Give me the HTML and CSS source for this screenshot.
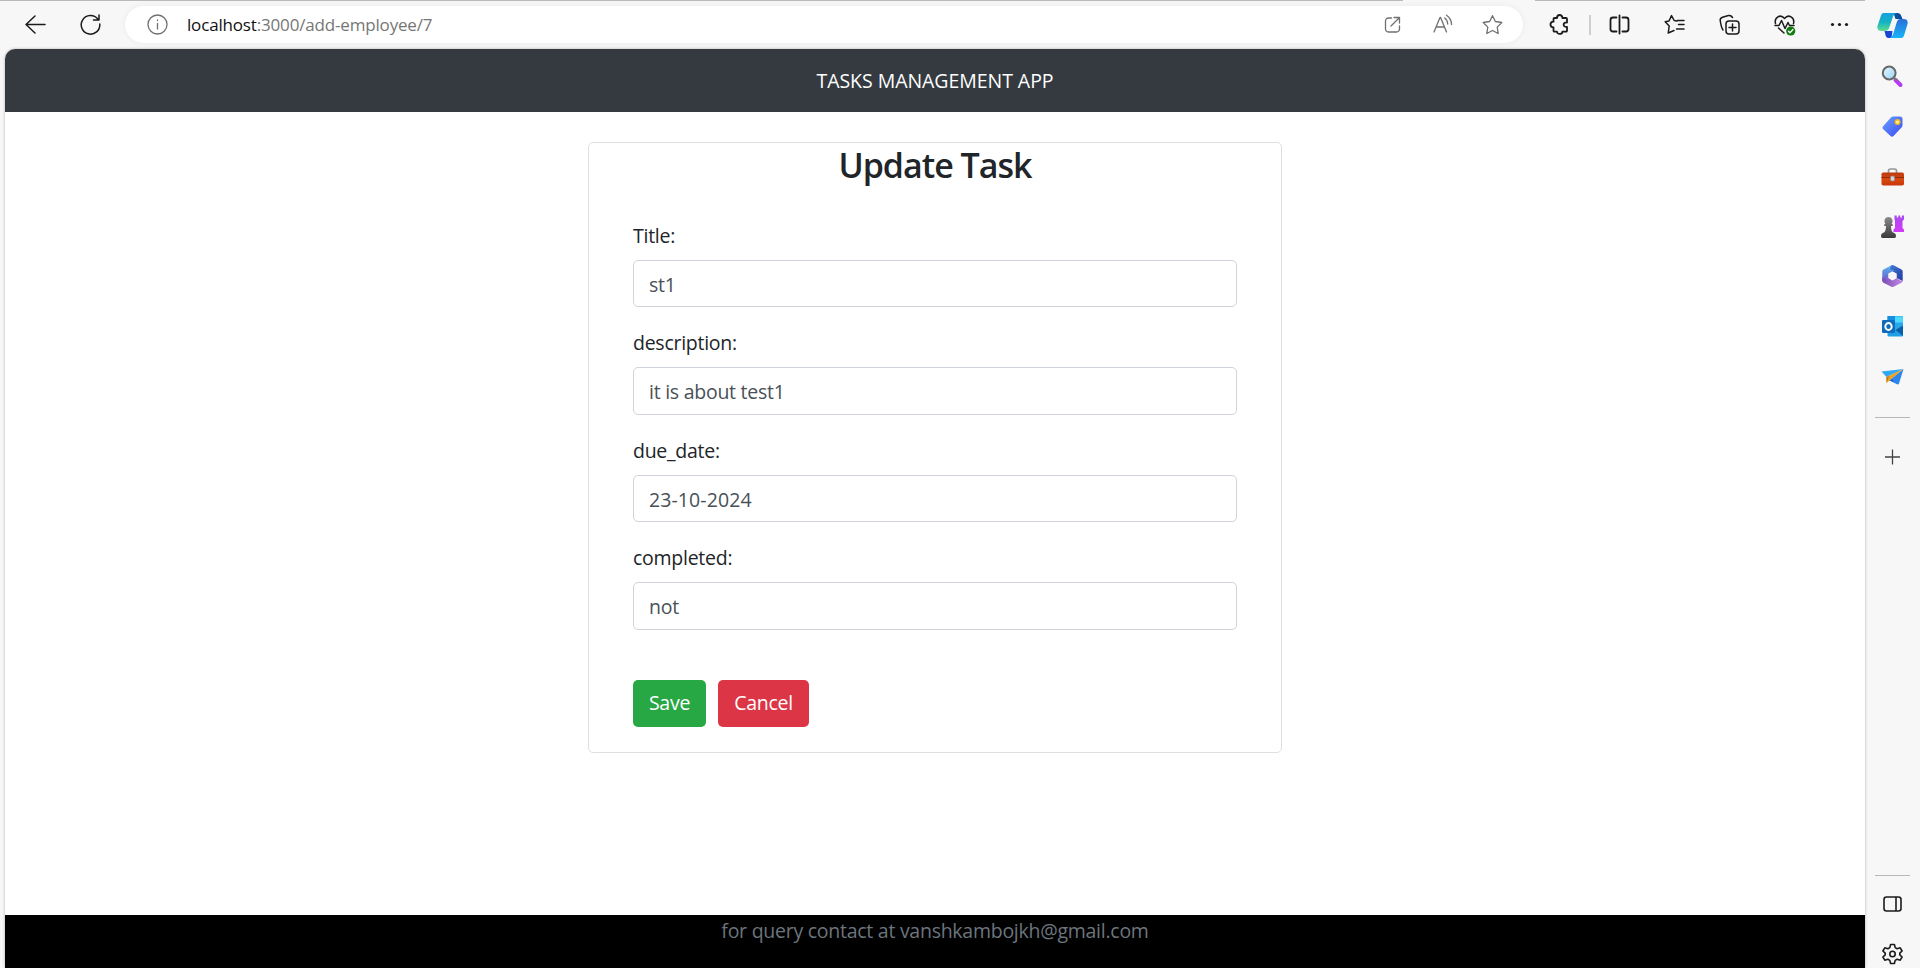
FILE: index.html
```html
<!DOCTYPE html>
<html lang="en">
<head>
<meta charset="utf-8">
<title>Tasks Management App</title>
<link rel="stylesheet" href="styles.css">
</head>
<body>
<div class="window">
  <div class="main">
    <div class="toolbar">
      <span class="slot"><svg class="icon" viewBox="-15.5 -15.5 31 31"><path d="M9.500 0H-9M-.5-8.500-9.500 0-.5 8.500"/></svg></span>
      <span class="slot"><svg class="icon" viewBox="-15.500 -15.500 31 31"><path d="M7.300-5.500A9.300 9.300 0 1 0 9.300-.5M8.500-9.500v5h-5.500"/></svg></span>
      <div class="address">
        <span class="slot info"><svg class="icon grey" viewBox="-15.500 -15.500 31 31"><circle r="9.500"/><path d="M0-1v5.500M0-4.500v.6"/></svg></span>
        <span class="url"><span class="host">localhost</span><span class="path">:3000/add-employee/7</span></span>
        <span class="addr-actions">
          <svg class="icon grey" viewBox="-15.500 -15.500 31 31"><path d="M-1-6.500h-3a3 3 0 0 0-3 3v8a3 3 0 0 0 3 3h8a3 3 0 0 0 3-3v-3M1.500-7h5.500v5.500M7-7-1.500 1.500"/></svg>
          <svg class="icon grey" viewBox="-15.500 -15.500 31 31"><path d="M-8.500 7.500-2.500-7h.6L4 7.500M-6.500 2.500H2M2.200-6.500Q5-4.500 5.200-.5M4-9.300Q9-6 9 0"/></svg>
          <svg class="icon grey" viewBox="-15.500 -15.500 31 31"><path d="M0-8.800 2.900-3 9.300-2 4.700 2.600 5.700 9 0 6-5.700 9-4.700 2.600-9.300-2-2.900-3Z"/></svg>
        </span>
      </div>
      <span class="slot"><svg class="icon thick" viewBox="-15.500 -15.500 31 31"><path d="M-4.500-6.500h2c0-4 5.400-4 5.400 0H6.500q1 0 1 1v3.500c-4.500-.6-4.500 5 0 4.400v3.800q0 1-1 1H2.900c0 3-5.400 3-5.400 0h-2.500q-1 0-1-1V2.800c-4 0-4-5.600 0-5.600v-2.700q0-1 1-1z"/></svg></span>
      <span class="divider"></span>
      <span class="slot"><svg class="icon thick" viewBox="-15.500 -15.500 31 31"><path d="M-3-7h-3.500a2.500 2.500 0 0 0-2.500 2.500v9A2.500 2.500 0 0 0-6.500 7H-3M3-7h3.500A2.500 2.500 0 0 1 9-4.500v9A2.500 2.500 0 0 1 6.500 7H3M0-9v18"/></svg></span>
      <span class="slot"><svg class="icon" viewBox="-15.500 -15.500 31 31"><path d="M3-4H9.500M4 0h5.500M2 4.500h7.500M2.500-3.500-.3-4-3-8.900-5.500-3.500-9.300-2.700-5.300 1.500-6.300 8.500-.5 6"/></svg></span>
      <span class="slot"><svg class="icon" viewBox="-15.500 -15.500 31 31"><path d="M-6.500 5.500Q-8.300 3-9.300-4-9.600-6.300-7-7.200L-1-9Q1.500-9.500 3-7"/><rect x="-3.500" y="-3.500" width="13" height="13" rx="3"/><path d="M3-.5v7M-.5 3h7"/></svg></span>
      <span class="slot"><svg class="icon" viewBox="-15.500 -15.500 31 31"><path d="M-9-1C-10.500-7-4-11 0-6 4-11 10.500-7 9-1M-9.500 1h4l2.500-5L.5 4 3.500-2 5 1H9.500M-6 3.500-.5 8.500"/><circle cx="6.200" cy="6.500" r="4.600" class="ok"/><path class="check" d="m4 6.700 1.500 1.500 3-3.200"/></svg></span>
      <span class="slot"><svg class="icon" viewBox="-15.500 -15.500 31 31"><g class="solid"><circle cx="-7" r="1.600"/><circle cx="0" r="1.600"/><circle cx="7" r="1.600"/></g></svg></span>
    </div>
    <div class="page">
      <header class="navbar"><a class="brand">TASKS MANAGEMENT APP</a></header>
      <main class="content">
        <section class="card">
          <h3 class="heading">Update Task</h3>
          <form class="form">
            <div class="group"><label>Title:</label><div class="control">st1</div></div>
            <div class="group"><label>description:</label><div class="control">it is about test1</div></div>
            <div class="group"><label>due_date:</label><div class="control date">23-10-2024</div></div>
            <div class="group"><label>completed:</label><div class="control">not</div></div>
            <div class="buttons"><button type="button" class="btn save">Save</button><button type="button" class="btn cancel">Cancel</button></div>
          </form>
        </section>
      </main>
      <footer class="footer">for query contact at vanshkambojkh@gmail.com</footer>
    </div>
  </div>
  <aside class="sidebar">
    <svg class="side" viewBox="-15.500 -15 31 30">
      <defs>
        <linearGradient id="cpA" x1="0" y1="0" x2="0" y2="1"><stop offset="0" stop-color="#1ba0e0"/><stop offset=".5" stop-color="#13b2c4"/><stop offset="1" stop-color="#5fdc8e"/></linearGradient>
        <linearGradient id="cpB" x1="0" y1="0" x2="0" y2="1"><stop offset="0" stop-color="#2b6fd8"/><stop offset="1" stop-color="#18b4fa"/></linearGradient>
        <linearGradient id="blue" x1="0" y1="0" x2="1" y2="1"><stop offset="0" stop-color="#6aa5ff"/><stop offset="1" stop-color="#3c46f0"/></linearGradient>
        <linearGradient id="red" x1="0" y1="0" x2="0" y2="1"><stop offset="0" stop-color="#b83a10"/><stop offset=".5" stop-color="#d9480f"/><stop offset="1" stop-color="#c8380a"/></linearGradient>
        <linearGradient id="grey" x1="0" y1="0" x2="0" y2="1"><stop offset="0" stop-color="#8a8a8a"/><stop offset="1" stop-color="#3a3a3a"/></linearGradient>
        <linearGradient id="purple" x1="0" y1="0" x2="0" y2="1"><stop offset="0" stop-color="#a54bf0"/><stop offset="1" stop-color="#d43bf8"/></linearGradient>
        <linearGradient id="lens" x1="0" y1="0" x2="1" y2="1"><stop offset="0" stop-color="#e4f6ff"/><stop offset="1" stop-color="#9cd4f7"/></linearGradient>
        <linearGradient id="mB" x1="0" y1="0" x2="1" y2="1"><stop offset="0" stop-color="#3f7fd8"/><stop offset="1" stop-color="#2438a0"/></linearGradient>
        <linearGradient id="mL" x1="0" y1="0" x2="0" y2="1"><stop offset="0" stop-color="#58b4ee"/><stop offset="1" stop-color="#6a5ac8"/></linearGradient>
        <linearGradient id="mP" x1="0" y1="0" x2="1" y2="0"><stop offset="0" stop-color="#7a4bb4"/><stop offset="1" stop-color="#c58ae6"/></linearGradient>
      </defs>
      <path d="M1-13H5Q8-13 9-9.500L10-7H3Z" fill="#0b4f9c"/>
      <path d="M-8 5H0L-1 12h-3Q-6.500 12-7 9Z" fill="#1646d2"/>
      <path d="M-9-13H4Q1-12 0-8L-3 1Q-4 5-8 5h-3q-5 0-4-5l3-9q1-4 3-4z" fill="url(#cpA)"/>
      <path d="M9 12H-3Q0 11 1 7L4-3Q5-7 8-7h3q5 0 4 5l-3 10q-1 4-3 4z" fill="url(#cpB)"/>
    </svg>
    <svg class="side" viewBox="-15.500 -15 31 30"><path d="m3 4 5 5" stroke="#b43cf5" stroke-width="4" stroke-linecap="round"/><path d="m2 2 2.500 2.500" stroke="#777" stroke-width="2"/><circle cx="-3.300" cy="-3" r="6.400" fill="url(#lens)" stroke="#686868" stroke-width="2"/></svg>
    <svg class="side" viewBox="-15.500 -15 31 30"><path d="M1-9.500h6.500q2.500 0 2.500 2.500v6q0 1.500-1 2.500l-8 8.500q-1.500 1.500-3 0l-7-6.500q-2-1.500-.5-3.200l8-8.800q1-1 2.500-1z" fill="url(#blue)"/><circle cx="5" cy="-4" r="2.300" fill="#fff3a0" stroke="#f2b81b" stroke-width="1.500"/></svg>
    <svg class="side" viewBox="-15.500 -15 31 30"><path d="M-4-3v-2q0-2 2-2h4q2 0 2 2v2" fill="none" stroke="#969696" stroke-width="1.700"/><rect x="-11" y="-3.500" width="22.500" height="13" rx="1.800" fill="url(#red)"/><path d="M-11 1.500h22.500" stroke="#8e2a08"/><rect x="-2" y="0" width="4" height="5" rx="1.500" fill="#d4d4d4" stroke="#888" stroke-width=".6"/></svg>
    <svg class="side" viewBox="-15.500 -15 31 30"><path d="M2-10.500h2.200v2h1.600v-2h2v2h1.600v-2h2.100v4l-1.500 1.500V2l1.500 1.500V6H1V3.500L2.500 2v-7L2-6.500z" fill="url(#purple)"/><path d="M-4-9a4 4 0 0 1 3 6.700q2 .3 1 2.300h-1.500q0 5 2 6.500 3 .8 3 3.500 0 2-1.500 2h-12q-1.500 0-1.500-2 0-2.700 3-3.500 2-1.500 2-6.500H-8q-1-2 1-2.300A4 4 0 0 1-4-9z" fill="url(#grey)"/></svg>
    <svg class="side" viewBox="-15.500 -15 31 30"><path d="M-2-10.300Q0-11.500 2-10.300L9-6.500q1.200.7 1.200 2V5L4 2v-4.500L-3-6z" fill="url(#mB)"/><path d="M-2-10.300-9-6.500q-1.200.7-1.200 2V5L-4 2v-4.500L2-5.500Q-5-6-2-10.300z" fill="url(#mL)"/><path d="M-10.200 1V5q0 1 1.200 1.700l7 3.600q2 1.200 4 0L9 6.700q1.200-.7 1.200-1.700Q8 5 4 2L0 4.500-4 2Q-9 4-10.200 1z" fill="url(#mP)"/><path d="M0-4.500 4-2.300V2L0 4.300-4 2v-4.300z" fill="#f7f7f7"/></svg>
    <svg class="side" viewBox="-15.500 -15 31 30"><rect x="-5" y="-10" width="15.500" height="14" rx="1" fill="#28a8ea"/><path d="M2.500-9.500h7q1 0 1 1v5h-8z" fill="#50d9ff"/><path d="M-5-10H2.500v7H-5z" fill="#1490df"/><path d="M-5 10V1l8 3 7.500-4.500V9.500q0 1-1 1H-4z" fill="#1fa0e6"/><path d="M3 4 10.500-.5V10z" fill="#0a5ea8"/><rect x="-10.500" y="-6" width="13" height="13" rx="1.200" fill="#0f6cbd"/><ellipse cx="-4" cy=".5" rx="3.200" ry="3.500" fill="none" stroke="#fff" stroke-width="1.900"/></svg>
    <svg class="side" viewBox="-15.500 -15 31 30"><path d="M-11-4.500 11-7-6 1z" fill="#30a9f2"/><path d="M11-7-6 1v6z" fill="#f0a01c"/><path d="M-6 1-3.500 0-6 7z" fill="#b87414"/><path d="M11-7-3 4.500 5 8.500q1.200 0 1.500-1z" fill="#2c86ee"/><path d="m-3 4.500 3-1.500L1.500 6z" fill="#1c5fc8"/></svg>
    <span class="rule"></span>
    <svg class="side plus" viewBox="-15.500 -15 31 30"><path d="M0-7.500v15M-7.500 0h15" stroke="#444" stroke-width="1.300"/></svg>
    <span class="rule bottom"></span>
    <svg class="side" viewBox="-15.500 -15 31 30"><rect x="-8.500" y="-7" width="17" height="14" rx="2.500" class="line"/><path d="M3.500-7v14" class="line"/></svg>
    <svg class="side last" viewBox="-15.500 -15 31 30"><path class="line" d="M-1.900-9.500h3.800l.8 3.100 1.900 1.100 3.100-.9 1.900 3.200L7.300-.8v1.600l2.300 2.200-1.900 3.200-3.100-.9-1.900 1.100-.8 3.100h-3.800l-.8-3.100-1.900-1.100-3.100.9-1.900-3.200 2.300-2.200v-1.600L-9.600-3l1.900-3.200 3.100.9 1.900-1.100z"/><circle r="2.700" class="line"/></svg>
  </aside>
</div>
</body>
</html>
```
FILE: styles.css
```css
* { box-sizing: border-box; }
body {
  margin: 0;
  height: 968px;
  overflow: hidden;
  background: #f7f7f7;
  font-family: "Open Sans", "Noto Sans", sans-serif;
  font-size: 19.5px;
  line-height: 30px;
  letter-spacing: -.26px;
  color: #212529;
}
.window { display: flex; height: 968px; overflow: hidden; }
.main { width: 1865px; flex: none; display: flex; flex-direction: column; }
.toolbar {
  height: 49px;
  padding-left: 8px;
  display: flex;
  align-items: center;
  background: linear-gradient(90deg, #bababa 1403px, transparent 1403px 1535px, #bababa 1535px) 0 0 / 100% 1px no-repeat;
}
.slot { width: 55px; flex: none; display: flex; justify-content: center; }
.icon {
  width: 31px;
  height: 31px;
  flex: none;
  fill: none;
  stroke: #1b1b1b;
  stroke-width: 1.5;
  stroke-linecap: round;
  stroke-linejoin: round;
}
.thick { stroke-width: 1.8; }
.grey { stroke: #707070; stroke-width: 1.3; }
.solid { fill: #1b1b1b; stroke: none; }
.ok { fill: #107c10; stroke: none; }
.check { stroke: #fff; stroke-width: 1.3; }
.address {
  width: 1398px;
  flex: none;
  height: 37px;
  margin: 0 9px 0 7px;
  display: flex;
  align-items: center;
  border-radius: 19px;
  background: #fff;
  box-shadow: 0 0 6px rgba(0, 0, 0, .06);
}
.info { width: 31px; margin: 0 14px 0 17px; }
.url { font-size: 17px; letter-spacing: -.17px; flex: 1; white-space: nowrap; }
.host { color: #111; }
.path { color: #767676; }
.addr-actions { display: flex; gap: 19px; padding-right: 15px; }
.divider { width: 2px; height: 20px; flex: none; margin: 0 1px 0 2px; background: #cfcfcf; }
.page {
  flex: 1;
  margin-left: 5px;
  display: flex;
  flex-direction: column;
  overflow: hidden;
  border-radius: 10px 10px 0 0;
  background: #fff;
  box-shadow: 0 0 3px rgba(0, 0, 0, .3);
}
.navbar {
  height: 63px;
  display: flex;
  align-items: center;
  justify-content: center;
  background: #343a40;
  color: #fff;
  letter-spacing: -.05px;
}
.content { flex: 1; padding-top: 30px; display: flex; justify-content: center; align-items: flex-start; }
.card { width: 694px; border: 1px solid #dfdfdf; border-radius: 5px; }
.heading {
  height: 42px;
  margin: 0 0 10px;
  padding-top: 1px;
  font-size: 34px;
  line-height: 42px;
  font-weight: 600;
  letter-spacing: -1px;
  text-align: center;
}
.form { padding: 24.8px 44px 25.2px; }
.group { margin-bottom: 20px; }
.group label { display: block; height: 30px; margin-bottom: 10px; padding-top: 1px; }
.control {
  height: 47.5px;
  padding: 9px 15px 0;
  border: 1px solid #ced4da;
  border-radius: 5px;
  color: #495057;
}
.date { letter-spacing: .1px; }
.buttons { display: flex; gap: 12px; padding-top: 30px; }
.btn {
  height: 47px;
  padding: 0;
  border: 0;
  border-radius: 5px;
  font: inherit;
  letter-spacing: inherit;
  color: #fff;
}
.save { width: 73px; background: #28a745; }
.cancel { width: 91px; background: #dc3545; }
.footer { height: 53px; padding-top: 1px; text-align: center; background: #000; color: #6c757d; }
.sidebar { width: 55px; flex: none; padding-top: 1px; display: flex; flex-direction: column; align-items: center; }
.side { width: 31px; height: 30px; margin: 10px 0; flex: none; }
.rule { width: 35px; height: 1px; flex: none; margin-top: 16px; background: #b8b8b8; }
.sidebar .plus { margin: 24px 0 0; }
.sidebar .bottom { margin: auto 0 3px; }
.sidebar .last { margin-bottom: -1px; }
.line { fill: none; stroke: #1b1b1b; stroke-width: 1.6; stroke-linejoin: round; }
```
